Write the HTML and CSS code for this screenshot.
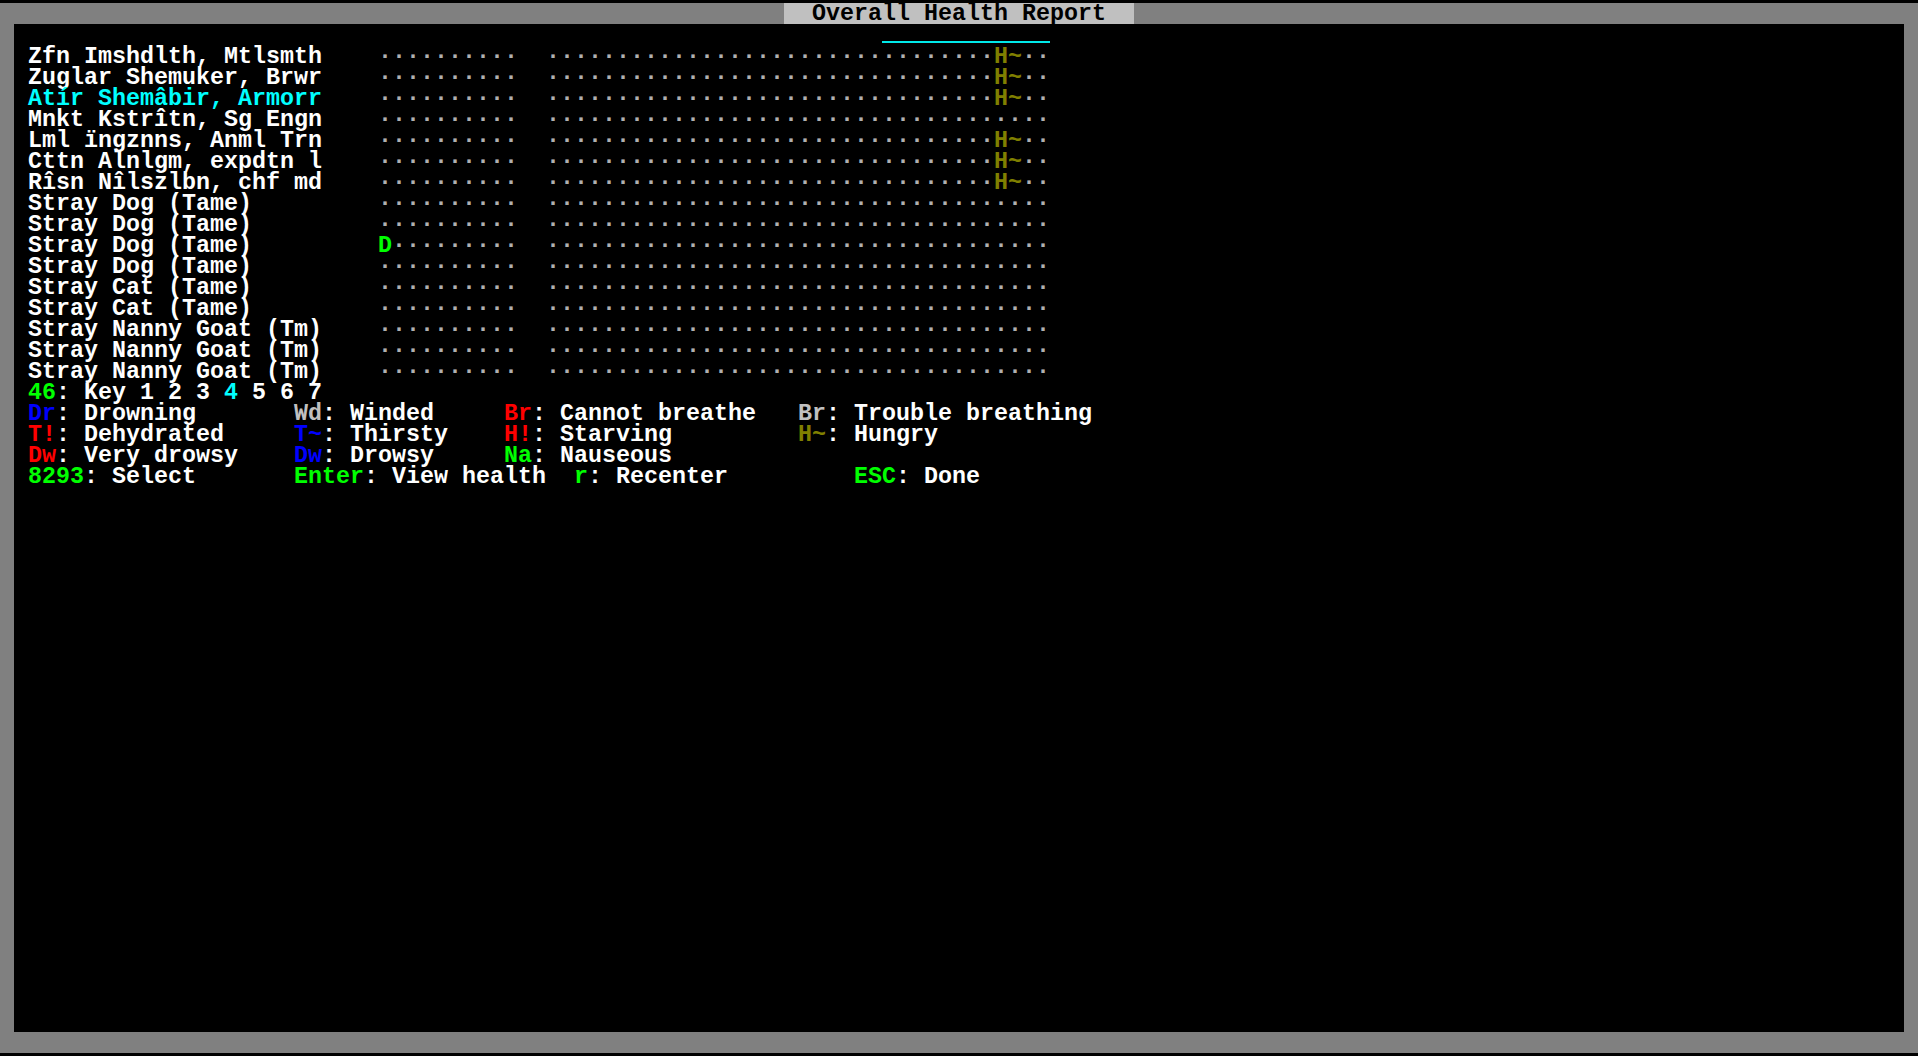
FILE: index.html
```html
<!DOCTYPE html>
<html>
<head>
<meta charset="utf-8">
<link rel="stylesheet" href="styles.css">
</head>
<body>
<div class="screen">
  <div class="titlebar"><span class="title">  Overall Health Report  </span></div>
  <div class="main">
    <div class="row"><span class="selbar"></span></div>
    <div class="row">Zfn Imshdlth, Mtlsmth    <span class="dot">··········  ································</span><span class="olive">H~</span><span class="dot">··</span></div>
    <div class="row">Zuglar Shemuker, Brwr    <span class="dot">··········  ································</span><span class="olive">H~</span><span class="dot">··</span></div>
    <div class="row"><span class="cyan">Atír Shemâbir, Armorr</span>    <span class="dot">··········  ································</span><span class="olive">H~</span><span class="dot">··</span></div>
    <div class="row">Mnkt Kstrîtn, Sg Engn    <span class="dot">··········  ····································</span></div>
    <div class="row">Lml ïngznns, Anml Trn    <span class="dot">··········  ································</span><span class="olive">H~</span><span class="dot">··</span></div>
    <div class="row">Cttn Alnlgm, expdtn l    <span class="dot">··········  ································</span><span class="olive">H~</span><span class="dot">··</span></div>
    <div class="row">Rîsn Nîlszlbn, chf md    <span class="dot">··········  ································</span><span class="olive">H~</span><span class="dot">··</span></div>
    <div class="row">Stray Dog (Tame)         <span class="dot">··········  ····································</span></div>
    <div class="row">Stray Dog (Tame)         <span class="dot">··········  ····································</span></div>
    <div class="row">Stray Dog (Tame)         <span class="green">D</span><span class="dot">·········  ····································</span></div>
    <div class="row">Stray Dog (Tame)         <span class="dot">··········  ····································</span></div>
    <div class="row">Stray Cat (Tame)         <span class="dot">··········  ····································</span></div>
    <div class="row">Stray Cat (Tame)         <span class="dot">··········  ····································</span></div>
    <div class="row">Stray Nanny Goat (Tm)    <span class="dot">··········  ····································</span></div>
    <div class="row">Stray Nanny Goat (Tm)    <span class="dot">··········  ····································</span></div>
    <div class="row">Stray Nanny Goat (Tm)    <span class="dot">··········  ····································</span></div>
    <div class="row"><span class="green">46</span>: Key 1 2 3 <span class="cyan">4</span> 5 6 7</div>
    <div class="row"><span class="blue">Dr</span>: Drowning       <span class="lgray">Wd</span>: Winded     <span class="red">Br</span>: Cannot breathe   <span class="lgray">Br</span>: Trouble breathing</div>
    <div class="row"><span class="red">T!</span>: Dehydrated     <span class="blue">T~</span>: Thirsty    <span class="red">H!</span>: Starving         <span class="olive">H~</span>: Hungry</div>
    <div class="row"><span class="red">Dw</span>: Very drowsy    <span class="blue">Dw</span>: Drowsy     <span class="green">Na</span>: Nauseous</div>
    <div class="row"><span class="green">8293</span>: Select       <span class="green">Enter</span>: View health  <span class="green">r</span>: Recenter         <span class="green">ESC</span>: Done</div>
  </div>
</div>
</body>
</html>
```

FILE: styles.css
```css
html, body {
  margin: 0;
  padding: 0;
  background: #000;
}
body {
  padding-top: 3px;
  font-family: "Liberation Mono", "DejaVu Sans Mono", monospace;
  font-weight: bold;
  font-size: 23.33px;
  color: #fff;
}
.screen {
  width: 1890px;
  height: 1029px;
  padding: 0 14px 21px 14px;
  background: #808080;
}
.titlebar {
  height: 21px;
  line-height: 23px;
  padding-left: 770px;
  white-space: pre;
}
.title {
  display: inline-block;
  vertical-align: top;
  height: 21px;
  background: #c0c0c0;
  color: #000;
}
.main {
  height: 1008px;
  background: #000;
  overflow: hidden;
}
.row {
  height: 21px;
  line-height: 24px;
  padding-left: 14px;
  white-space: pre;
}
.selbar {
  display: block;
  margin-left: 854px;
  padding-top: 17px;
  width: 168px;
  height: 0;
  border-bottom: 2px solid #00e8e8;
}
.dot { color: #b0b0b0; }
.cyan { color: #00ffff; }
.green { color: #00ff00; }
.blue { color: #0000ff; }
.red { color: #ff0000; }
.olive { color: #808000; }
.lgray { color: #c0c0c0; }
```
